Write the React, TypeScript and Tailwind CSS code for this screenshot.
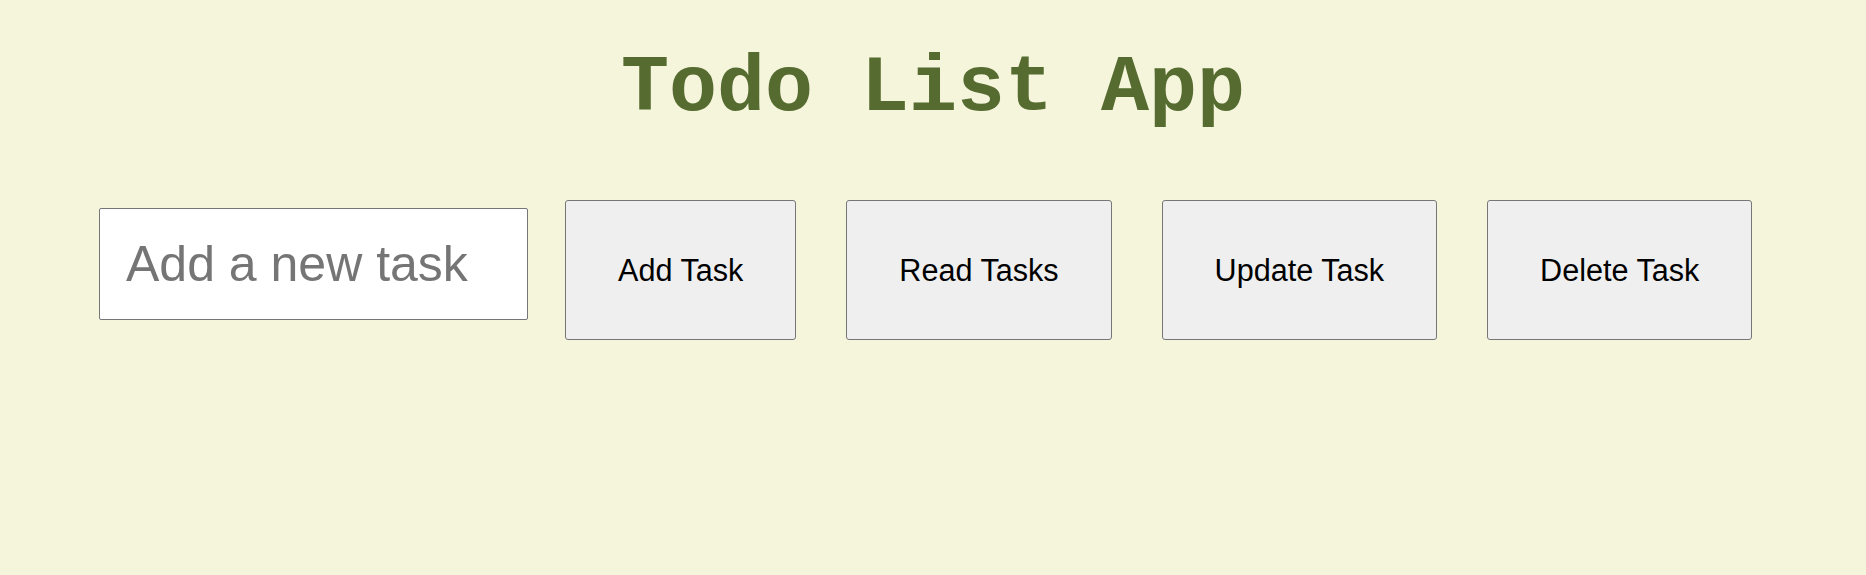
import React from "react";

const actions = ["Add Task", "Read Tasks", "Update Task", "Delete Task"];

const App = () => {
	const [task, setTask] = React.useState("");

	return (
		<div className="min-h-screen w-full bg-[#f5f5dc]">
			{/* Heading */}
			<h1
				className="pt-[43px] text-center text-[80px] leading-[91px] font-bold text-[#556b2f]"
				style={{ fontFamily: '"Liberation Mono", "Courier New", monospace' }}
			>
				Todo List App
			</h1>

			{/* Input + action buttons */}
			<div
				className="mt-[66px] flex items-baseline pl-[99px]"
				style={{ fontFamily: '"Liberation Sans", Arial, sans-serif' }}
			>
				<input
					type="text"
					value={task}
					onChange={(e) => setTask(e.target.value)}
					placeholder="Add a new task"
					className="h-[112px] w-[429px] rounded-[2px] border border-[#767676] bg-white px-[26px] text-[50px] text-black outline-none placeholder:text-[#757575]"
				/>
				<div className="ml-[37px] flex items-baseline gap-[50px]">
					{actions.map((label) => (
						<button
							key={label}
							type="button"
							className="rounded-[3px] border border-[#767676] bg-[#efefef] px-[52px] py-[52px] text-[30.6px] leading-[34px] text-black hover:bg-[#e5e5e5]"
						>
							{label}
						</button>
					))}
				</div>
			</div>
		</div>
	);
};

export default App;
